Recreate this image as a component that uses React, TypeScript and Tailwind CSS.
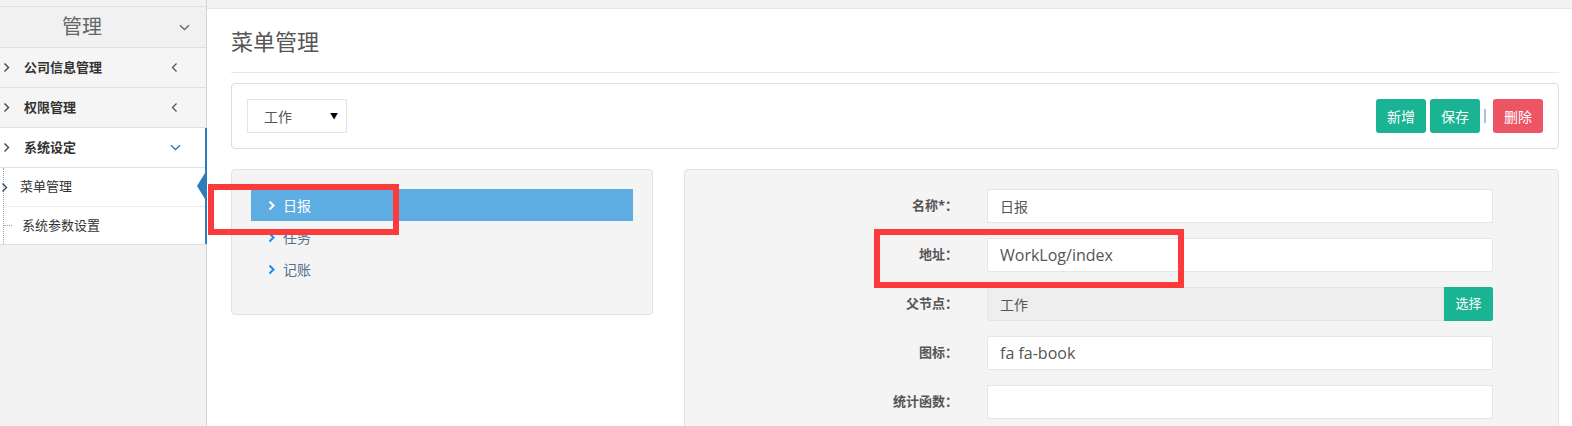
import React from "react";

const FONT = '"Open Sans","Noto Sans CJK SC",sans-serif';

function ChevRight({ className = "", color = "#555", sw = 1.4 }: { className?: string; color?: string; sw?: number }) {
  return (
    <svg className={className} width="7" height="11" viewBox="0 0 7 11" fill="none">
      <polyline points="1.5,1.5 5.5,5.5 1.5,9.5" stroke={color} strokeWidth={sw} />
    </svg>
  );
}
function ChevLeft({ className = "", color = "#555" }: { className?: string; color?: string }) {
  return (
    <svg className={className} width="7" height="11" viewBox="0 0 7 11" fill="none">
      <polyline points="5.5,1.5 1.5,5.5 5.5,9.5" stroke={color} strokeWidth="1.3" />
    </svg>
  );
}
function ChevDown({ className = "", color = "#555" }: { className?: string; color?: string }) {
  return (
    <svg className={className} width="11" height="7" viewBox="0 0 11 7" fill="none">
      <polyline points="1,1.2 5.5,5.5 10,1.2" stroke={color} strokeWidth="1.3" />
    </svg>
  );
}

function SideItem({ label, open }: { label: string; open?: boolean }) {
  return (
    <div
      className={`h-[40px] flex items-center border-b border-[#e0e0e0] ${open ? "bg-white" : "bg-[#f5f5f5]"}`}
    >
      <ChevRight className="ml-[3px]" color="#444" />
      <span className="ml-[14px] text-[13px] font-bold text-[#333] flex-1">{label}</span>
      {open ? (
        <ChevDown className="mr-[24px]" color="#3c70b5" />
      ) : (
        <ChevLeft className="mr-[28px]" color="#555" />
      )}
    </div>
  );
}

function FormRow({
  label,
  value,
  latin,
  disabled,
  button,
}: {
  label: string;
  value: string;
  latin?: boolean;
  disabled?: boolean;
  button?: string;
}) {
  return (
    <div className="flex items-center h-[34px]">
      <div className="w-[273px] text-right text-[13px] font-bold text-[#555]">{label}</div>
      <div className="ml-[29px] w-[506px] h-[34px] flex">
        <div
          className={`flex-1 h-full border border-[#e5e6e7] flex items-center px-[12px] text-[#555] ${
            latin ? "text-[16px]" : "text-[14px]"
          } ${disabled ? "bg-[#eeeeee]" : "bg-white"} ${button ? "rounded-l-[2px]" : "rounded-[2px]"}`}
        >
          {value}
        </div>
        {button && (
          <div className="w-[49px] h-full bg-[#1ab394] text-white text-[13px] flex items-center justify-center rounded-r-[2px]">
            {button}
          </div>
        )}
      </div>
    </div>
  );
}

export default function App() {
  return (
    <div className="relative w-[1572px] h-[426px] overflow-hidden flex bg-white" style={{ fontFamily: FONT }}>
      {/* Sidebar */}
      <aside className="w-[207px] shrink-0 h-full bg-[#f2f2f2] border-r border-[#d4d4d4] flex flex-col">
        <div className="h-[7px] border-b border-[#e2e2e2] bg-[#f2f2f2]" />
        <div className="h-[41px] flex items-center border-b border-[#e0e0e0] bg-[#f1f1f1]">
          <span className="ml-[62px] text-[20px] text-[#666] flex-1 leading-none">管理</span>
          <ChevDown className="mr-[16px]" color="#666" />
        </div>
        <SideItem label="公司信息管理" />
        <SideItem label="权限管理" />
        <div className="relative -mr-[1px] border-r-2 border-[#2c7cc0] bg-white">
          <SideItem label="系统设定" open />
          <div className="relative border-l border-dotted border-[#8fa6c0] ml-[3px]">
            <div className="h-[39px] flex items-center border-b border-dotted border-[#d8d8d8]">
              <ChevRight className="-ml-[3px]" color="#3a4a66" />
              <span className="ml-[12px] text-[13px] text-[#333]">菜单管理</span>
            </div>
            <div className="h-[37px] flex items-center">
              <span className="w-[8px] border-t border-dotted border-[#8fa6c0]" />
              <span className="ml-[10px] text-[13px] text-[#333]">系统参数设置</span>
            </div>
          </div>
          <svg className="absolute right-0 top-[45px]" width="8" height="26" viewBox="0 0 8 26">
            <polygon points="8,0 0,13 8,26" fill="#2c7cc0" />
          </svg>
        </div>
        <div className="border-t border-[#e0e0e0] flex-1" />
      </aside>

      {/* Main */}
      <main className="flex-1 flex flex-col">
        <div className="h-[9px] bg-[#f2f2f2] border-b border-[#e6e6e6] shrink-0" />
        <div className="pl-[24px] pr-[13px]">
          <div className="pt-[18px] pb-[16px] border-b border-[#e7e7e7]">
            <h1 className="text-[22px] leading-[29px] text-[#555] font-normal">菜单管理</h1>
          </div>

          {/* Toolbar */}
          <div className="mt-[10px] h-[66px] border border-[#dddddd] rounded-[4px] flex items-center justify-between px-[15px]">
            <div className="w-[100px] h-[34px] border border-[#e5e5e5] bg-white flex items-center justify-between pl-[16px] pr-[8px]">
              <span className="text-[14px] text-[#555]">工作</span>
              <span className="text-[8px] text-black">▼</span>
            </div>
            <div className="flex items-center">
              <div className="w-[50px] h-[34px] rounded-[3px] bg-[#1ab394] text-white text-[14px] flex items-center justify-center">新增</div>
              <div className="ml-[4px] w-[50px] h-[34px] rounded-[3px] bg-[#1ab394] text-white text-[14px] flex items-center justify-center">保存</div>
              <span className="ml-[4px] w-[2px] h-[14px] bg-[#a9c4df]" />
              <div className="ml-[7px] w-[50px] h-[34px] rounded-[3px] bg-[#ed5565] text-white text-[14px] flex items-center justify-center">删除</div>
            </div>
          </div>

          {/* Panels */}
          <div className="mt-[20px] flex gap-[31px]">
            <div className="w-[422px] h-[146px] bg-[#f4f4f4] border border-[#e3e3e3] rounded-[4px] pt-[19px] px-[19px]">
              <div className="h-[32px] bg-[#5dade2] flex items-center pl-[17px]">
                <ChevRight color="#ffffff" sw={2} />
                <span className="ml-[8px] text-[14px] text-white">日报</span>
              </div>
              <div className="h-[32px] flex items-center pl-[17px]">
                <ChevRight color="#1a8cf0" sw={2} />
                <span className="ml-[8px] text-[14px] text-[#56708f]">任务</span>
              </div>
              <div className="h-[32px] flex items-center pl-[17px]">
                <ChevRight color="#1a8cf0" sw={2} />
                <span className="ml-[8px] text-[14px] text-[#56708f]">记账</span>
              </div>
            </div>

            <div className="flex-1 h-[300px] bg-[#f4f4f4] border border-[#e3e3e3] rounded-[4px] pt-[19px] flex flex-col gap-[15px]">
              <FormRow label="名称*：" value="日报" />
              <FormRow label="地址：" value="WorkLog/index" latin />
              <FormRow label="父节点：" value="工作" disabled button="选择" />
              <FormRow label="图标：" value="fa fa-book" latin />
              <FormRow label="统计函数：" value="" />
            </div>
          </div>
        </div>
      </main>

      {/* Annotation overlays */}
      <div className="absolute left-[208px] top-[184px] w-[191px] h-[51px] border-[6px] border-[#fd3a3a]" />
      <div className="absolute left-[874px] top-[229px] w-[310px] h-[59px] border-[6px] border-[#fd3a3a]" />
    </div>
  );
}
